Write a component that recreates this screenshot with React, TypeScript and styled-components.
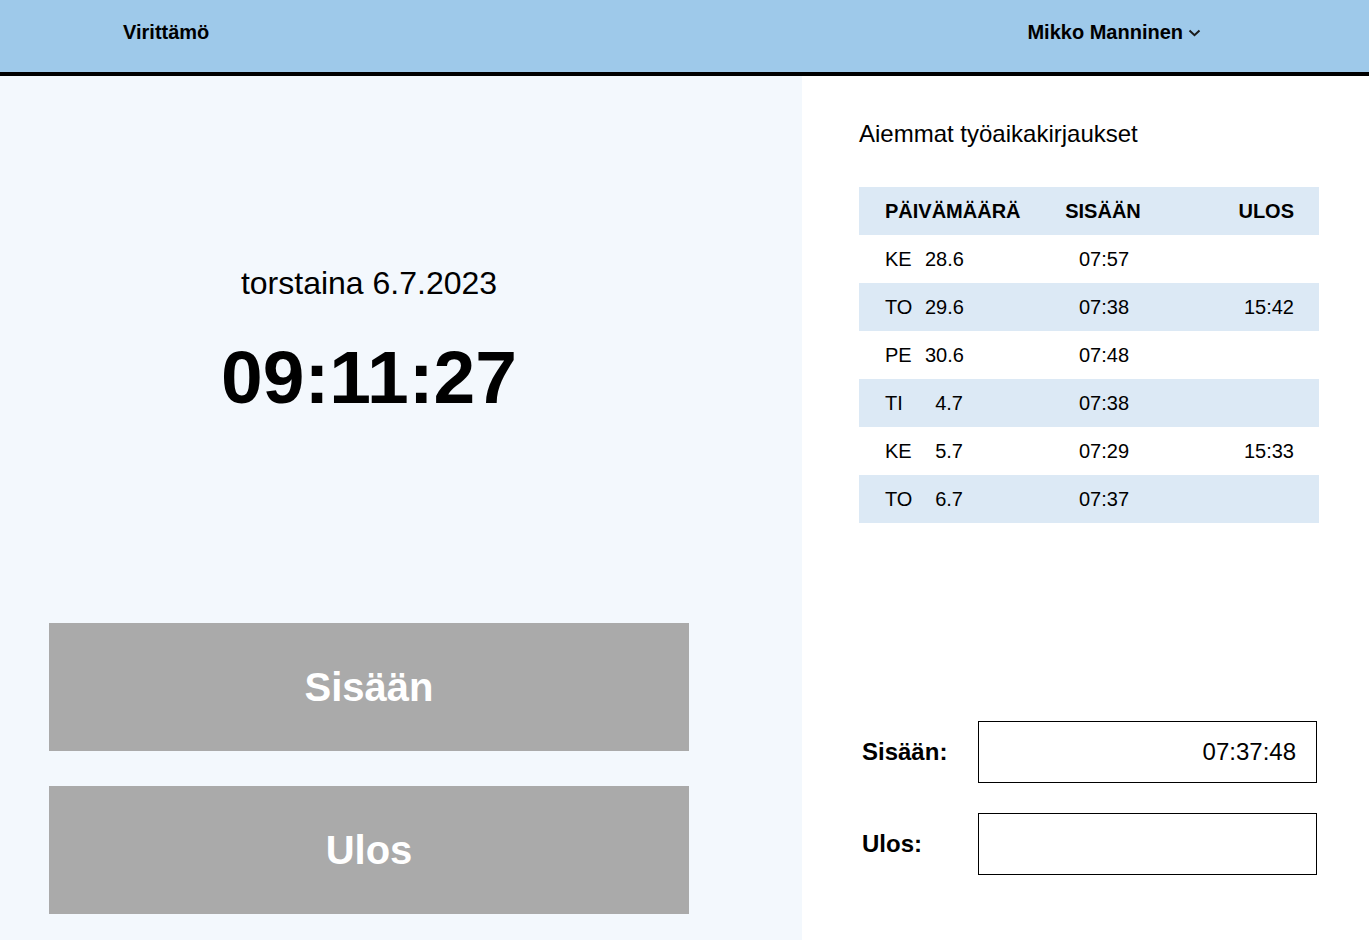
import React from "react";
import styled, { createGlobalStyle } from "styled-components";

const GlobalStyle = createGlobalStyle`
  html, body { margin: 0; padding: 0; }
  body {
    font-family: "Liberation Sans", Arial, sans-serif;
    color: #000;
    background: #fff;
  }
  #root { min-height: 100vh; display: flex; flex-direction: column; }
  * { box-sizing: border-box; }
`;

const Page = styled.div`
  display: flex;
  flex-direction: column;
  min-height: 100vh;
`;

const TopBar = styled.header`
  height: 76px;
  flex-shrink: 0;
  background: #9ec9ea;
  border-bottom: 4px solid #000;
  display: flex;
  justify-content: space-between;
  align-items: flex-start;
  padding: 21px 168px 0 123px;
`;

const Brand = styled.div`
  font-size: 20px;
  line-height: 23px;
  font-weight: 700;
`;

const UserMenu = styled.div`
  display: flex;
  align-items: center;
  gap: 5px;
  font-size: 20px;
  line-height: 23px;
  font-weight: 700;
`;

const Main = styled.main`
  flex: 1;
  display: flex;
`;

const ClockPanel = styled.section`
  width: 802px;
  flex-shrink: 0;
  background: #f3f8fd;
  display: flex;
  flex-direction: column;
  padding: 0 0 26px 49px;
`;

const ClockArea = styled.div`
  width: 640px;
  display: flex;
  flex-direction: column;
  align-items: center;
  padding-top: 189px;
`;

const DateText = styled.div`
  font-size: 32px;
  line-height: 36px;
`;

const TimeText = styled.div`
  margin-top: 34px;
  font-size: 75px;
  line-height: 84px;
  font-weight: 700;
`;

const Buttons = styled.div`
  margin-top: auto;
  width: 640px;
  display: flex;
  flex-direction: column;
  gap: 35px;
`;

const BigButton = styled.button`
  height: 128px;
  width: 100%;
  border: none;
  background: #aaaaaa;
  color: #fff;
  font-family: "Liberation Sans", Arial, sans-serif;
  font-size: 40px;
  font-weight: 700;
  cursor: pointer;
`;

const HistoryPanel = styled.section`
  flex: 1;
  background: #fff;
  display: flex;
  flex-direction: column;
  padding: 44px 50px 65px 57px;
`;

const Title = styled.h2`
  margin: 0 0 39px;
  font-size: 24px;
  line-height: 28px;
  font-weight: 400;
`;

const Table = styled.div`
  width: 460px;
  display: flex;
  flex-direction: column;
`;

const Row = styled.div<{ $shaded?: boolean; $head?: boolean }>`
  height: 48px;
  display: grid;
  grid-template-columns: 152px 134px 1fr;
  align-items: center;
  padding: 0 25px 0 26px;
  background: ${(p) => (p.$shaded ? "#dce9f5" : "#fff")};
  font-size: 20px;
  font-weight: ${(p) => (p.$head ? 700 : 400)};
`;

const Cell = styled.div<{ $align?: "left" | "center" | "right" }>`
  text-align: ${(p) => p.$align ?? "left"};
  white-space: nowrap;
`;

const HeadCell = styled(Cell)`
  margin-left: ${(p) => (p.$align === "center" ? "-2px" : "0")};
`;

const DateCell = styled.div`
  display: flex;
`;

const Day = styled.span`
  width: 40px;
`;

const DayDate = styled.span`
  width: 38px;
  text-align: right;
`;

const Form = styled.div`
  margin-top: auto;
  display: flex;
  flex-direction: column;
  gap: 30px;
`;

const FormRow = styled.div`
  display: flex;
  align-items: center;
`;

const FormLabel = styled.label`
  width: 119px;
  padding-left: 3px;
  font-size: 24px;
  font-weight: 700;
`;

const TimeBox = styled.div`
  width: 339px;
  height: 62px;
  border: 1px solid #000;
  display: flex;
  align-items: center;
  justify-content: flex-end;
  padding-right: 20px;
  font-size: 24px;
`;

const rows = [
  { day: "KE", date: "28.6", inT: "07:57", outT: "" },
  { day: "TO", date: "29.6", inT: "07:38", outT: "15:42" },
  { day: "PE", date: "30.6", inT: "07:48", outT: "" },
  { day: "TI", date: "4.7", inT: "07:38", outT: "" },
  { day: "KE", date: "5.7", inT: "07:29", outT: "15:33" },
  { day: "TO", date: "6.7", inT: "07:37", outT: "" },
];

const Chevron = () => (
  <svg width="13" height="8" viewBox="0 0 13 8" aria-hidden="true">
    <polyline
      points="1.5,1.5 6.5,6.2 11.5,1.5"
      fill="none"
      stroke="#1a1a1a"
      strokeWidth="2"
    />
  </svg>
);

export default function App() {
  return (
    <>
      <GlobalStyle />
      <Page>
        <TopBar>
          <Brand>Virittämö</Brand>
          <UserMenu>
            Mikko Manninen
            <Chevron />
          </UserMenu>
        </TopBar>
        <Main>
          <ClockPanel>
            <ClockArea>
              <DateText>torstaina 6.7.2023</DateText>
              <TimeText>09:11:27</TimeText>
            </ClockArea>
            <Buttons>
              <BigButton>Sisään</BigButton>
              <BigButton>Ulos</BigButton>
            </Buttons>
          </ClockPanel>
          <HistoryPanel>
            <Title>Aiemmat työaikakirjaukset</Title>
            <Table>
              <Row $shaded $head>
                <HeadCell>PÄIVÄMÄÄRÄ</HeadCell>
                <HeadCell $align="center">SISÄÄN</HeadCell>
                <HeadCell $align="right">ULOS</HeadCell>
              </Row>
              {rows.map((r, i) => (
                <Row key={i} $shaded={i % 2 === 1}>
                  <DateCell>
                    <Day>{r.day}</Day>
                    <DayDate>{r.date}</DayDate>
                  </DateCell>
                  <Cell $align="center">{r.inT}</Cell>
                  <Cell $align="right">{r.outT}</Cell>
                </Row>
              ))}
            </Table>
            <Form>
              <FormRow>
                <FormLabel>Sisään:</FormLabel>
                <TimeBox>07:37:48</TimeBox>
              </FormRow>
              <FormRow>
                <FormLabel>Ulos:</FormLabel>
                <TimeBox />
              </FormRow>
            </Form>
          </HistoryPanel>
        </Main>
      </Page>
    </>
  );
}
